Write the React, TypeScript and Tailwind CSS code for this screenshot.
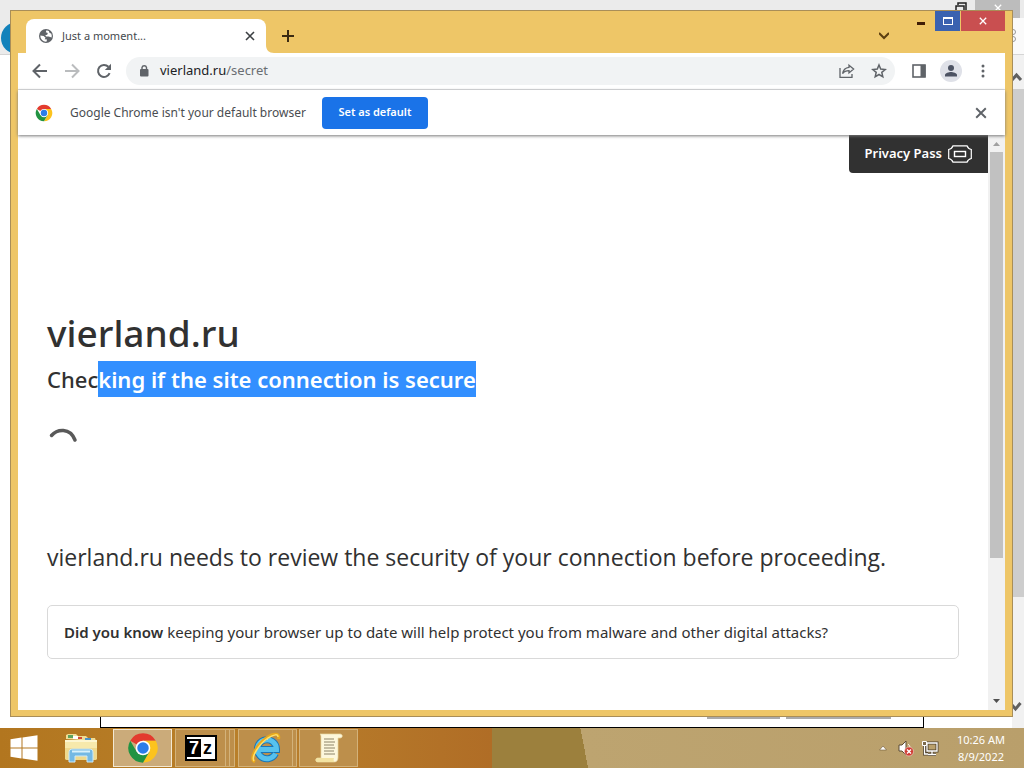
import React from 'react';

// Icons of the browser toolbar

const GlobeIcon = () => (
    <svg viewBox="0 0 16 16" className="w-4 h-4 shrink-0">
        <circle cx="8" cy="8" r="7" fill="#5f6368" />
        <path d="M8.500 2.300 7.800 4.300 9.800 5 9.200 6.800 7.200 7.200 8.200 8.600 10.600 8.400 13.600 9.400A5.700 5.700 0 0 0 13.200 5.400L11.600 5 10.800 3Z" fill="#fff" />
        <path d="M2.300 7.600 5.600 8 7.600 9.800 6.600 11.200 9 11.600 8.600 13.600A5.700 5.700 0 0 1 2.300 7.600Z" fill="#fff" />
    </svg>
);

const ChromeIcon = ({ className }: { className?: string }) => (
    <svg viewBox="0 0 48 48" className={className}>
        <path d="M24 24 4.9 13A22 22 0 0 1 43.1 13H24Z" fill="#e33b2e" />
        <path d="M43.1 13A22 22 0 0 1 24 46L33.5 29.5 24 13Z" fill="#fcc31e" />
        <path d="M4.9 13A22 22 0 0 0 24 46L33.5 29.5H14.5Z" fill="#229342" />
        <circle cx="24" cy="24" r="11" fill="#fff" />
        <circle cx="24" cy="24" r="8.6" fill="#2b7de9" />
    </svg>
);

const BackIcon = () => (
    <svg viewBox="0 0 16 16" className="w-4 h-4" fill="none" stroke="currentColor" strokeWidth="2">
        <path d="M15 8H2M8 1.5 1.5 8 8 14.5" />
    </svg>
);

const ForwardIcon = () => (
    <svg viewBox="0 0 16 16" className="w-4 h-4" fill="none" stroke="currentColor" strokeWidth="2">
        <path d="M1 8h13M8 1.5 14.5 8 8 14.5" />
    </svg>
);

const ReloadIcon = () => (
    <svg viewBox="0 0 16 16" className="w-4 h-4">
        <path d="M13.6 10.2A6 6 0 1 1 12.4 3.8" fill="none" stroke="currentColor" strokeWidth="2" />
        <path d="M15 .8V7H8.8Z" fill="currentColor" />
    </svg>
);

const LockIcon = () => (
    <svg viewBox="0 0 12 14" className="w-3 h-3.5">
        <rect x="2" y="5" width="8.500" height="7.500" rx="1" fill="#5f6368" />
        <path d="M4 5.500V3.500a2.300 2.300 0 0 1 4.500 0v2" fill="none" stroke="#5f6368" strokeWidth="1.400" />
    </svg>
);

const ShareIcon = () => (
    <svg viewBox="0 0 16 16" className="w-4 h-4" fill="none" stroke="currentColor" strokeWidth="1.3">
        <path d="M1 5v9.3h12V11" />
        <path d="M10 2.2 14.6 6 10 9.9V7.7C7 7.7 5 8.6 3.6 10.7 4.1 7.4 6.2 4.9 10 4.4Z" />
    </svg>
);

const StarIcon = () => (
    <svg viewBox="0 0 16 16" className="w-4 h-4" fill="none" stroke="currentColor" strokeWidth="1.5">
        <path d="M8 2 9.7 6.1 14.2 6.5 10.8 9.4 11.8 13.8 8 11.5 4.2 13.8 5.2 9.4 1.8 6.5 6.3 6.1Z" />
    </svg>
);

const SidePanelIcon = () => (
    <svg viewBox="0 0 16 16" className="w-4 h-4">
        <rect x="2" y="2" width="12" height="12" fill="none" stroke="currentColor" strokeWidth="1.6" />
        <rect x="9.5" y="2" width="5" height="12" fill="currentColor" />
    </svg>
);

const PersonIcon = () => (
    <svg viewBox="0 0 22 22" className="w-[22px] h-[22px]">
        <circle cx="11" cy="11" r="11" fill="#dfe1e8" />
        <circle cx="11" cy="8" r="3" fill="#4d5363" />
        <path d="M5 16.5v-1.4c0-2 4-3 6-3s6 1 6 3v1.4Z" fill="#4d5363" />
    </svg>
);

const DotsIcon = () => (
    <svg viewBox="0 0 16 16" className="w-4 h-4" fill="currentColor">
        <circle cx="8" cy="3" r="1.5" />
        <circle cx="8" cy="8" r="1.5" />
        <circle cx="8" cy="13" r="1.5" />
    </svg>
);

const CloseIcon = ({ className }: { className?: string }) => (
    <svg viewBox="0 0 10 10" className={className} fill="none" stroke="currentColor" strokeWidth="1.6">
        <path d="M1 1 9 9M9 1 1 9" />
    </svg>
);

const PrivacyPassIcon = () => (
    <svg viewBox="0 0 24 18" className="w-6 h-[18px]" fill="none" stroke="#fff">
        <path d="M5 .8h14c.6 1.800 2 3.200 4.300 3.700v9c-2.300.5-3.700 1.900-4.300 3.700H5c-.6-1.800-2-3.200-4.300-3.700v-9C3 4 4.400 2.600 5 .8Z" strokeWidth="1.200" />
        <rect x="6.500" y="6.500" width="11" height="5" strokeWidth="1.4" />
    </svg>
);

// Icons of the taskbar

const WindowsIcon = () => (
    <svg viewBox="0 0 28 26" className="w-7 h-[26px]" fill="#fff">
        <path d="M.5 4.200 11.500 2.600V12.600H.5ZM12.500 2.400 27.500.3V12.600H12.500ZM.5 13.600H11.500V23.400L.5 21.800ZM12.500 13.600H27.500V25.700L12.500 23.600Z" />
    </svg>
);

const ExplorerIcon = () => (
    <svg viewBox="0 0 32 30" className="w-8 h-[30px]">
        <path d="M1 6V2l2-1h8l2 2h8l2 2h7l1 3Z" fill="#efdc95" />
        <path d="M3 2h5v3H3Z" fill="#5da25c" />
        <path d="M8 3h5v3H8Z" fill="#fff" />
        <path d="M13 4h4v2h-4Z" fill="#cf4836" />
        <path d="M20 5h6v2h-6Z" fill="#4a93c8" />
        <path d="M0 7h32v19l-2 1H2l-2-1Z" fill="#f7e9ab" />
        <path d="M0 15h32v11l-2 1H2l-2-1Z" fill="#efd98d" />
        <path d="M0 7h32v2H0Z" fill="#fdf6d0" />
        <path d="M4 29V20c0-3 1-4 4-4h16c3 0 4 1 4 4v9h-6v-6H10v6Z" fill="#74b9e4" stroke="#cdeaf8" />
        <path d="M7 18.500h18" stroke="#d9f1fb" strokeWidth="2" />
    </svg>
);

const SevenZipIcon = () => (
    <span className="flex h-[26px] w-8 items-center justify-center border-2 border-black bg-white font-['Liberation_Sans',sans-serif] text-lg leading-[18px] font-bold">
        <span className="bg-black px-0.5 text-white">7</span>
        <span className="px-0.5 text-black">z</span>
    </span>
);

const InternetExplorerIcon = () => (
    <svg viewBox="0 0 32 32" className="w-8 h-8" fill="none">
        <path d="M25.500 21.500A9.500 9.500 0 1 1 26.500 17.500H9" stroke="#1b76b5" strokeWidth="7" />
        <path d="M25.500 21.500A9.500 9.500 0 1 1 26.500 17.500H9" stroke="#56c2ee" strokeWidth="5" />
        <path d="M9 12c2-4 6-5 9-5" stroke="#bdeafb" strokeWidth="1.500" />
        <path d="M5 30C-1 27 6 13 17 5.500 24 1 30 1 28.500 7" stroke="#e9a81c" strokeWidth="3" />
        <path d="M4 29C1 25 9 12 18 6 24 2.500 28 1.500 28 5" stroke="#ffe06a" strokeWidth="1.500" />
    </svg>
);

const ScrollIcon = () => (
    <svg viewBox="0 0 28 30" className="w-7 h-[30px]">
        <path d="M5 1h20c3 0 3 4 0 4h-2v19c0 3-1 5-4 5H3c-3 0-3-4 0-4h3V5C6 3 6 2 5 1Z" fill="#fdf7dc" stroke="#e6d8a4" strokeWidth=".7" />
        <path d="M9 6h10M9 9h11M9 12h10M9 15h11M9 18h10M9 21h11" stroke="#8d8468" />
        <path d="M3 25h16c-1 2 0 4 1 4H3c-3 0-3-4 0-4Z" fill="#f3e3a2" />
    </svg>
);

const SpeakerIcon = () => (
    <svg viewBox="0 0 18 18" className="w-[18px] h-[18px]">
        <path d="M2 6h3l4-4v14l-4-4H2Z" fill="#fff" stroke="#5b4b35" />
        <path d="M11 5c1 1 2 2 2 4" fill="none" stroke="#fff" />
        <circle cx="12" cy="12.500" r="4.500" fill="#cf3a31" stroke="#f2d8d0" strokeWidth=".6" />
        <path d="M10 10.500 14 14.500M14 10.500 10 14.500" stroke="#fff" strokeWidth="1.400" />
    </svg>
);

const NetworkIcon = () => (
    <svg viewBox="0 0 18 18" className="w-[18px] h-[18px]" fill="none">
        <path d="M6 4h10v8H6ZM11 12v3M7 15.500h8M3.500 7v8H7" stroke="#51422d" strokeWidth="3" />
        <path d="M6 4h10v8H6ZM11 12v3M7 15.500h8M3.500 7v8H7" stroke="#fff" strokeWidth="1.300" />
        <path d="M1.500 2.500h4v4h-4Z" fill="#7c6a4e" stroke="#fff" />
    </svg>
);

const tools = [
    { label: 'Side panel', icon: <SidePanelIcon /> },
    { label: 'Profile', icon: <PersonIcon /> },
    { label: 'Menu', icon: <DotsIcon /> },
];

const TabStrip = () => (
    <div className="relative flex h-[42px] shrink-0 items-end">
        <div className="ml-2 flex h-[34px] w-60 items-center gap-2 rounded-t-lg bg-white pl-3 pr-[9px]">
            <GlobeIcon />
            <span className="flex-1 text-[11px] text-[#45494d]">Just a moment...</span>
            <button aria-label="Close tab" className="p-0.5 text-[#3c4043]"><CloseIcon className="w-2.5 h-2.5" /></button>
        </div>
        {/* Foot of the tab, curving into the toolbar */}
        <svg viewBox="0 0 8 8" className="w-2 h-2" fill="#fff"><path d="M0 0C0 5 3 8 8 8H0Z" /></svg>
        <button aria-label="New tab" className="ml-2 mb-[11px] text-[#3b2b12]">
            <svg viewBox="0 0 12 12" className="w-3 h-3" stroke="currentColor" strokeWidth="2"><path d="M6 0V12M0 6H12" /></svg>
        </button>
        <button aria-label="Search tabs" className="ml-auto mr-[116px] mb-3 text-[#5c3f10]">
            <svg viewBox="0 0 10 10" className="w-2.5 h-2.5" fill="none" stroke="currentColor" strokeWidth="2"><path d="M0 2 5 7 10 2" /></svg>
        </button>
        {/* Caption buttons */}
        <div className="absolute top-0 right-0 flex h-5">
            <button aria-label="Minimize" className="flex w-7 items-center justify-center pt-1"><span className="h-[3px] w-2 bg-[#3f1d06]" /></button>
            <button aria-label="Maximize" className="flex w-[25px] items-center justify-center bg-[#3a62b0]"><span className="h-2 w-2.5 border border-t-2 border-white" /></button>
            <button aria-label="Close" className="ml-px flex w-11 items-center justify-center bg-[#c94f50] text-white"><CloseIcon className="w-2 h-2" /></button>
        </div>
    </div>
);

const Toolbar = () => (
    <div className="flex h-[37px] shrink-0 items-center border-b border-[#dcdee0] bg-white pl-3.5 pr-3.5 text-[#5f6368]">
        <button aria-label="Back"><BackIcon /></button>
        <button aria-label="Forward" className="ml-4 text-[#babcbe]"><ForwardIcon /></button>
        <button aria-label="Reload" className="ml-4"><ReloadIcon /></button>
        <div className="ml-3.5 flex h-7 flex-1 items-center rounded-full bg-[#f1f3f4] pl-3 pr-2">
            <LockIcon />
            <div className="ml-2.5 flex-1 text-[13px] text-[#6a6e72]"><span className="text-[#202124]">vierland.ru</span>/secret</div>
            <button aria-label="Share"><ShareIcon /></button>
            <button aria-label="Bookmark" className="ml-4"><StarIcon /></button>
        </div>
        <div className="ml-4 flex items-center gap-[13px]">
            {tools.map(t => <button key={t.label} aria-label={t.label}>{t.icon}</button>)}
        </div>
    </div>
);

const InfoBar = () => (
    <div className="relative z-10 flex h-[45px] shrink-0 items-center bg-white pl-[17px] pr-[18px] shadow-[0_1px_3px_#777]">
        <ChromeIcon className="w-[18px] h-[18px]" />
        <p className="ml-[17px] text-xs text-[#4a4d51]">Google Chrome isn't your default browser</p>
        <button className="ml-4 h-8 w-[106px] rounded-[4px] bg-[#1a73e8] text-[11px] font-semibold text-white">Set as default</button>
        <button aria-label="Dismiss" className="ml-auto text-[#5f6368]"><CloseIcon className="w-3 h-3" /></button>
    </div>
);

const Page = () => (
    <div className="flex min-h-0 flex-1 bg-white">
        <main className="relative min-w-0 flex-1 overflow-hidden pl-[29px] pr-[29px] pt-[173px] text-[#313131]">
            <a href="#privacy-pass" className="absolute top-0 right-0 flex h-[38px] items-center gap-1.5 rounded-bl bg-[#313131] px-4 text-[13px] font-semibold text-white">
                Privacy Pass
                <PrivacyPassIcon />
            </a>
            <h1 className="text-[37px] leading-[50px] font-medium">vierland.ru</h1>
            <h2 className="mt-[3px] flex text-[22px] leading-9 font-medium">
                <span>Chec</span><mark className="bg-[#328fff] font-semibold text-white">king if the site connection is secure</mark>
            </h2>
            <svg viewBox="0 0 32 32" className="mt-[30px] w-8 h-8" fill="none" stroke="#595959" strokeWidth="3.500" strokeLinecap="round">
                <path d="M4.500 8.500C10 2 23 0 28 13" />
            </svg>
            <p className="mt-20 font-['Open_Sans',sans-serif] text-[23px] leading-9">vierland.ru needs to review the security of your connection before proceeding.</p>
            <div className="mt-[30px] flex h-[54px] items-center rounded-[5px] border border-[#d9d9d9] px-4 text-[15px]">
                <p><strong className="font-semibold">Did you know</strong> keeping your browser up to date will help protect you from malware and other digital attacks?</p>
            </div>
        </main>
        {/* Scrollbar */}
        <div className="flex w-[17px] flex-col items-center bg-[#f1f1f1]">
            <svg viewBox="0 0 17 17" className="w-[17px] h-[17px] shrink-0"><path d="M5 11H12L8.500 7Z" fill="#a0a0a0" /></svg>
            <div className="flex min-h-0 w-full flex-1 flex-col px-0.5">
                <div className="h-3/4 bg-[#c1c1c1]" />
            </div>
            <svg viewBox="0 0 17 17" className="w-[17px] h-[17px] shrink-0"><path d="M5 6H12L8.500 10Z" fill="#505050" /></svg>
        </div>
    </div>
);

// The maximized browser that lies behind the active window
const BackWindow = () => (
    <div className="absolute inset-0 flex flex-col bg-white">
        <div className="flex h-[18px] justify-end bg-[#ebebeb] pr-1">
            <svg viewBox="0 0 12 12" className="mt-0.5 mr-2 w-3 h-3" fill="none" stroke="#222" strokeWidth="1.500"><path d="M3 3V1H11V9H9M1 4H9V11H1Z" /></svg>
            <div className="flex w-[45px] justify-center bg-[#bcbcbc] pt-1 text-white"><CloseIcon className="w-2 h-2" /></div>
        </div>
        <div className="flex h-[37px] items-end border-b border-[#d5d5d5] bg-[#ebebeb]">
            <div className="ml-px h-8 w-8 rounded-full bg-[#1282bb]" />
            <div className="ml-auto flex h-9 w-3 items-center bg-[#fafafa]">
                <svg viewBox="0 0 12 16" className="w-3 h-4" fill="none" stroke="#999"><circle cx="1" cy="4" r="2.500" /><circle cx="1" cy="11" r="2.500" /></svg>
            </div>
        </div>
        <div className="flex min-h-0 flex-1">
            <div className="flex flex-1 items-end pl-[100px] pr-[88px]">
                <div className="flex h-12 w-full items-end justify-end border border-t-0 border-black pr-8 pb-2">
                    <div className="h-1 w-[73px] bg-[#aaa]" />
                    <div className="ml-1.5 h-1 w-[105px] bg-[#aaa]" />
                </div>
            </div>
            <div className="flex w-3 flex-col items-center bg-[#f1f1f1]">
                <svg viewBox="0 0 12 34" className="w-3 h-[34px] shrink-0" fill="none" stroke="#606060" strokeWidth="3"><path d="M0 25 4.500 20 9 25" /></svg>
                <div className="h-[508px] w-full bg-[#cdcdcd]" />
                <svg viewBox="0 0 12 30" className="mt-auto w-3 h-[30px] shrink-0" fill="none" stroke="#606060" strokeWidth="3"><path d="M0 7 3.500 11 8.500 5" /></svg>
            </div>
        </div>
    </div>
);

const Taskbar = () => (
    <footer className="relative flex h-10 shrink-0 items-center bg-[linear-gradient(79deg,transparent_57%,#bda470_57%,#b99f6b_100%),linear-gradient(90deg,#b2761f_0%,#b9802b_25%,#b06d26_48%,#9c803d_48%)] pr-[19px]">
        <button aria-label="Start" className="flex w-12 justify-center"><WindowsIcon /></button>
        <button aria-label="File Explorer" className="ml-[9px] flex w-12 justify-center"><ExplorerIcon /></button>
        <button aria-label="Google Chrome" className="ml-2 flex h-[38px] w-[59px] items-center justify-center border border-[#f3e8d2] bg-[#cbab7a]"><ChromeIcon className="w-8 h-8" /></button>
        <div className="ml-[3px] flex h-[38px] border border-[#d3b27a] bg-[#bd8f4b]">
            <button aria-label="7-Zip" className="flex w-[50px] items-center justify-center border-r border-[#d3b27a]"><SevenZipIcon /></button>
            <span className="w-1 border-r border-[#d3b27a]" />
            <span className="w-1" />
        </div>
        <div className="ml-[3px] flex h-[38px] border border-[#d3b27a] bg-[#bd8f4b]">
            <button aria-label="Internet Explorer" className="flex w-[54px] items-center justify-center border-r border-[#d3b27a]"><InternetExplorerIcon /></button>
            <span className="w-[3px]" />
        </div>
        <button aria-label="Script host" className="ml-[2px] flex h-[38px] w-[59px] items-center justify-center border border-[#d3b27a] bg-[#bd8f4b]"><ScrollIcon /></button>
        <div className="ml-auto flex items-center">
            <button aria-label="Show hidden icons"><svg viewBox="0 0 8 6" className="w-2 h-1.5"><path d="M.5 5 4 1 7.500 5Z" fill="#fff" stroke="#6b5738" strokeWidth=".6" /></svg></button>
            <button aria-label="Volume" className="ml-2.5"><SpeakerIcon /></button>
            <button aria-label="Network" className="ml-1.5"><NetworkIcon /></button>
            <time className="ml-[18px] text-center text-[11px] leading-[17px] text-white">10:26 AM<br />8/9/2022</time>
        </div>
    </footer>
);

export default function App() {
    return (
        <div className="flex h-screen flex-col overflow-hidden font-['Noto_Sans','Open_Sans',sans-serif]">
            <div className="relative min-h-0 flex-1">
                <BackWindow />
                <div className="absolute top-2.5 right-[11px] bottom-[11px] left-2.5 flex flex-col border border-[#a98e58] bg-[#eec667] px-[7px] pb-1.5">
                    <TabStrip />
                    <Toolbar />
                    <InfoBar />
                    <Page />
                </div>
            </div>
            <Taskbar />
        </div>
    );
}
